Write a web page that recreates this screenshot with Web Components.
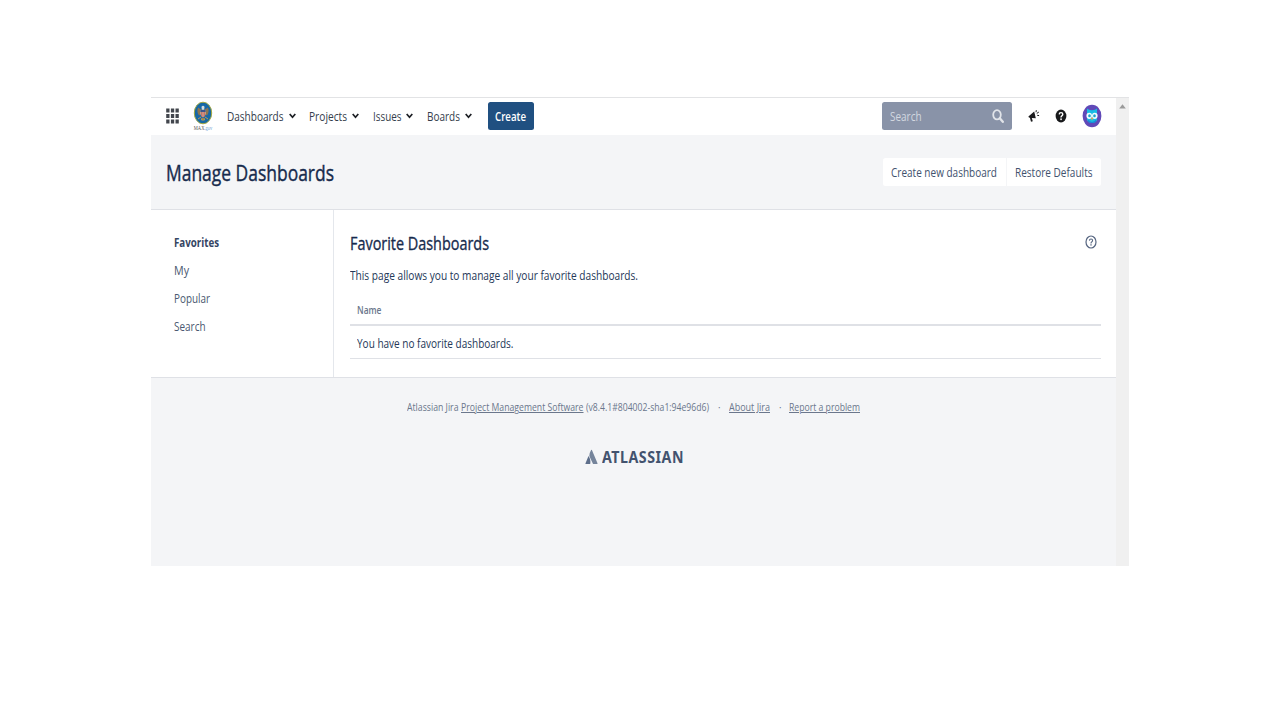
<!DOCTYPE html>
<html lang="en">
<head>
<meta charset="utf-8">
<title>Manage Dashboards</title>
<style>
html,body{margin:0;height:100%;background:#fff;overflow:hidden}
body{font-family:"Open Sans","Noto Sans",sans-serif;color:#172b4d}
</style>
</head>
<body>
<jira-window></jira-window>
<script>
function define(name, html, setup) {
  const tpl = document.createElement('template');
  tpl.innerHTML = html;
  customElements.define(name, class extends HTMLElement {
    connectedCallback() {
      if (this.shadowRoot) return;
      this.attachShadow({mode: 'open'}).appendChild(tpl.content.cloneNode(true));
      if (setup) setup(this, this.shadowRoot);
    }
  });
}

/* One line of text condensed to the width given in "w" */
define('fit-text', `
<style>:host{display:block;flex:none;white-space:nowrap;line-height:20px;height:20px}
span{display:inline-block;transform-origin:0 50%;white-space:pre}
:host([link]) span{text-decoration:underline;text-decoration-thickness:1px;text-underline-offset:1px}</style>
<span><slot></slot></span>`, (host, root) => {
  const w = parseFloat(host.getAttribute('w'));
  host.style.width = w + 'px';
  const s = root.querySelector('span');
  s.style.transform = 'scaleX(' + w / s.getBoundingClientRect().width + ')';
});

define('nav-item', `
<style>:host{display:flex;align-items:center;gap:5px;font-size:13.2px;color:#353d4b}
svg{flex:none}</style>
<slot></slot>
<svg width="7" height="6" viewBox="0 0 7 6"><path d="M.7 1 3.5 4.3 6.3 1" fill="none" stroke="#1c1f24" stroke-width="1.7"/></svg>`);

define('app-button', `
<style>:host{display:flex;align-items:center;justify-content:center;height:27.5px;box-sizing:border-box;font-size:13.2px;flex:none;background:#fff;color:#42526e;border-radius:2.5px}
:host([primary]){background:#205081;color:#fff;font-weight:600}
:host([first]){border-radius:2.5px 0 0 2.5px}:host([last]){border-radius:0 2.5px 2.5px 0}</style>
<slot></slot>`);

define('app-seal', `
<style>:host{display:block;width:20px;height:30px}svg{display:block}</style>
<svg width="20" height="30" viewBox="0 0 20 30">
<ellipse cx="10" cy="12" rx="8.7" ry="10.8" fill="#12669c" stroke="#a5a842" stroke-width="1"/>
<ellipse cx="10" cy="12" rx="7.6" ry="9.7" fill="#1768a7"/>
<path d="M5 6.5Q3.5 11 6 14.5L9 12.5 9 9ZM15 6.5Q16.5 11 14 14.5L11 12.5 11 9Z" fill="#8d7550"/>
<path d="M8.5 5.8Q10 3.6 11.5 5.8L11.2 8.7H8.8Z" fill="#d8dcda"/>
<path d="M7.4 9H12.6V13Q12.4 15.4 10 16.5 7.6 15.4 7.4 13Z" fill="#d8bba8"/>
<path d="M7.4 9H12.6V11H7.4Z" fill="#3a568c"/><path d="M8.6 11V15.5M10 11V16.3M11.4 11V15.5" stroke="#bd4a43" stroke-width=".7"/>
<path d="M8 16 5 18M12 16 15 18M9 17 8.5 19H11.5L11 17" stroke="#b79b54" fill="#8c7746"/>
<text x=".8" y="29" font-family="Liberation Serif, serif" font-size="5.4" textLength="18.6" lengthAdjust="spacingAndGlyphs" fill="#555">MAX<tspan fill="#6f9fd6">.gov</tspan></text>
</svg>`);

define('search-box', `
<style>:host{display:flex;align-items:center;justify-content:space-between;box-sizing:border-box;width:130px;height:27.5px;padding:0 8px;background:#8993a8;border-radius:2.5px;color:#d3d8e0;font-size:13.2px}</style>
<fit-text w="31.5">Search</fit-text>
<svg width="12" height="14" viewBox="0 0 12 14"><ellipse cx="5" cy="5.8" rx="3.8" ry="4.6" fill="none" stroke="#e1e4e9" stroke-width="1.8"/><path d="M7.8 9.2 10.8 12.8" stroke="#e1e4e9" stroke-width="2.3" stroke-linecap="round"/></svg>`);

define('icon-apps', `
<style>:host{display:block}svg{display:block}</style>
<svg width="13" height="16" viewBox="0 0 13 16" fill="#42464d"><path d="M.2.6h3.3v3.8H.2zM4.9.6h3.3v3.8H4.9zM9.5.6h3.3v3.8H9.5zM.2 6.1h3.3v3.8H.2zM4.9 6.1h3.3v3.8H4.9zM9.5 6.1h3.3v3.8H9.5zM.2 11.6h3.3v3.8H.2zM4.9 11.6h3.3v3.8H4.9zM9.5 11.6h3.3v3.8H9.5z"/></svg>`);

define('icon-feedback', `
<style>:host{display:block}svg{display:block}</style>
<svg width="12" height="14" viewBox="0 0 12 14"><path d="M.4 7.4 6.2 2.4 7.8 9.2 3.8 8.9 4.8 12.3 3 12.8 1.9 8.8 .9 8.6Z" fill="#1b1b1d"/><path d="M8 3.2 8.3 1.2M8.8 4.4 10.8 3.1M9.2 6.3 11.1 6.6" stroke="#1b1b1d" stroke-width="1" fill="none"/></svg>`);

define('icon-help', `
<style>:host{display:block}svg{display:block}</style>
<svg width="12" height="14" viewBox="0 0 12 14"><ellipse cx="6" cy="7" rx="5.4" ry="6.5" fill="#18191b"/><path d="M4.2 5.4Q4.3 3.6 6 3.6 7.8 3.6 7.8 5.3 7.8 6.3 6.8 6.9 6 7.4 6 8.5" fill="none" stroke="#fff" stroke-width="1.4"/><rect x="5.3" y="9.4" width="1.5" height="1.7" fill="#fff"/></svg>`);

define('user-avatar', `
<style>:host{display:block}svg{display:block}</style>
<svg width="20" height="24" viewBox="0 0 20 24"><ellipse cx="10" cy="12" rx="9.4" ry="11.3" fill="#6049b8"/>
<path d="M5 4.6Q6.5 6.2 10 6.2 13.5 6.2 15 4.6V15.5Q14.5 18.8 10 18.8 5.5 18.8 5 15.5Z" fill="#18bce5"/>
<path d="M6 15.8Q10 20 14 15.8V17.8Q12.5 19 10 19 7.5 19 6 17.8Z" fill="#178bd6"/>
<ellipse cx="7.2" cy="11.8" rx="2.8" ry="3.1" fill="#effcff"/><ellipse cx="12.8" cy="11.8" rx="2.8" ry="3.1" fill="#effcff"/>
<ellipse cx="7.5" cy="11.8" rx="1.3" ry="1.5" fill="#19a4cb"/><ellipse cx="12.5" cy="11.8" rx="1.3" ry="1.5" fill="#19a4cb"/>
<path d="M8.8 13.8H11.2L10 16.4Z" fill="#f6a544"/></svg>`);

define('top-bar', `
<style>:host{display:flex;align-items:center;height:37px;box-sizing:border-box;padding:0 14px 1px 15px;background:#fff}
app-seal{margin:0 14px 0 14px}nav{display:flex;gap:13.5px}
.create{width:46.5px;margin-left:16px}
.right{display:flex;align-items:center;margin-left:auto}
icon-feedback{margin-left:16px}icon-help{margin:0 15.5px 0 15px}</style>
<icon-apps></icon-apps><app-seal></app-seal>
<nav>
<nav-item><fit-text w="56.5">Dashboards</fit-text></nav-item>
<nav-item><fit-text w="38">Projects</fit-text></nav-item>
<nav-item><fit-text w="28.5">Issues</fit-text></nav-item>
<nav-item><fit-text w="33">Boards</fit-text></nav-item>
</nav>
<app-button class="create" primary><fit-text w="31">Create</fit-text></app-button>
<div class="right"><search-box></search-box><icon-feedback></icon-feedback><icon-help></icon-help><user-avatar></user-avatar></div>`);

define('page-header', `
<style>:host{display:flex;align-items:center;justify-content:space-between;height:75px;box-sizing:border-box;padding:0 15.5px 0 15px;border-bottom:1px solid #dfe1e6;background:#f4f5f7}
.title{font-size:21.8px;-webkit-text-stroke:.4px #172b4d;height:30px;line-height:30px;color:#172b4d;margin-top:2px}
.acts{display:flex;gap:1.5px}</style>
<fit-text class="title" w="168">Manage Dashboards</fit-text>
<div class="acts"><app-button first style="width:123px"><fit-text w="106">Create new dashboard</fit-text></app-button><app-button last style="width:93.5px"><fit-text w="77.5">Restore Defaults</fit-text></app-button></div>`);

define('side-nav', `
<style>:host{display:flex;flex-direction:column;gap:8px;width:183px;box-sizing:border-box;padding:22px 0 0 23px;border-right:1px solid #e4e7ec;font-size:13.2px;color:#4a5870}
.on{font-weight:700;color:#344563}</style>
<fit-text class="on" w="45">Favorites</fit-text><fit-text w="15">My</fit-text><fit-text w="36">Popular</fit-text><fit-text w="31.5">Search</fit-text>`);

define('favorite-panel', `
<style>:host{display:block;flex:1;padding:21px 15px 0 15.5px;font-size:13.2px;color:#172b4d}
.top{display:flex;align-items:center;justify-content:space-between;height:24px;padding-right:4px}
.h{font-size:18.1px;-webkit-text-stroke:.35px #172b4d;height:24px;line-height:24px}
.intro{margin-top:10px;color:#253858}
.th{height:31px;display:flex;align-items:center;margin-top:8px;padding:0 8px 0 7.5px;border-bottom:2px solid #dfe1e6;font-size:11px;font-weight:600;color:#6b778c}
.th fit-text{margin-top:2px}
.td{height:32px;display:flex;align-items:center;padding:0 7.5px;border-bottom:1px solid #dfe1e6;color:#253858}
.td fit-text{margin-top:2px}
svg{display:block;margin-top:-2px}</style>
<div class="top"><fit-text class="h" w="139">Favorite Dashboards</fit-text>
<svg width="12" height="14" viewBox="0 0 12 14"><ellipse cx="6" cy="7" rx="5" ry="6" fill="none" stroke="#566580" stroke-width="1.2"/><path d="M4.4 5.6Q4.5 4 6 4 7.6 4 7.6 5.5 7.6 6.4 6.7 6.9 6 7.4 6 8.4" fill="none" stroke="#566580" stroke-width="1.1"/><rect x="5.4" y="9.2" width="1.2" height="1.4" fill="#566580"/></svg></div>
<fit-text class="intro" w="288">This page allows you to manage all your favorite dashboards.</fit-text>
<div class="th"><fit-text w="24.5">Name</fit-text></div>
<div class="td"><fit-text w="156.5">You have no favorite dashboards.</fit-text></div>`);

define('page-footer', `
<style>:host{display:flex;flex-direction:column;align-items:center;flex:1;padding-top:19px;font-size:11px;color:#6b778c}
.links{display:flex;width:454px}
.logo{display:flex;align-items:center;gap:4px;margin:30px 0 0 1px;color:#42526e;font:700 16.5px "Noto Sans","Open Sans",sans-serif;letter-spacing:.6px}
svg{display:block;margin-top:-1px}</style>
<div class="links"><fit-text w="51.5">Atlassian Jira</fit-text><fit-text link w="122.5" style="margin:0 2.5px 0 2.5px">Project Management Software</fit-text><fit-text w="123">(v8.4.1#804002-sha1:94e96d6)</fit-text><fit-text w="2.5" style="margin:0 8px 0 9.5px">·</fit-text><fit-text link w="41">About Jira</fit-text><fit-text w="2.5" style="margin:0 8px 0 9px">·</fit-text><fit-text link w="71">Report a problem</fit-text></div>
<div class="logo"><svg width="13" height="16" viewBox="0 0 13 16"><path d="M3.5 7Q6 10.5 5.2 15H.7Q.2 15 .5 14.3Z" fill="#5e6f8b"/><path d="M6.1 1Q6.5.4 6.9 1L12.5 14.3Q12.7 15 12.2 15H8.5Q8 15 7.8 14.4L4.3 7Q4.5 3.5 6.1 1Z" fill="#75849b"/></svg><fit-text w="82">ATLASSIAN</fit-text></div>`);

define('scroll-rail', `
<style>:host{display:flex;justify-content:center;width:13px;background:#f0f0f0;padding-top:6px;box-sizing:border-box}</style>
<svg width="7" height="5" viewBox="0 0 7 5"><path d="M3.5.2 6.8 4.5H.2Z" fill="#9a9a9a"/></svg>`);

define('jira-window', `
<style>:host{display:flex;width:978px;height:469px;box-sizing:border-box;margin:97px 0 0 151px;border-top:1px solid #e2e3e5;background:#f4f5f7}
main{flex:1;display:flex;flex-direction:column}
.body{display:flex;height:168px;box-sizing:border-box;background:#fff;border-bottom:1px solid #dfe1e6}</style>
<main><top-bar></top-bar><page-header></page-header><div class="body"><side-nav></side-nav><favorite-panel></favorite-panel></div><page-footer></page-footer></main>
<scroll-rail></scroll-rail>`);
</script>
</body>
</html>
